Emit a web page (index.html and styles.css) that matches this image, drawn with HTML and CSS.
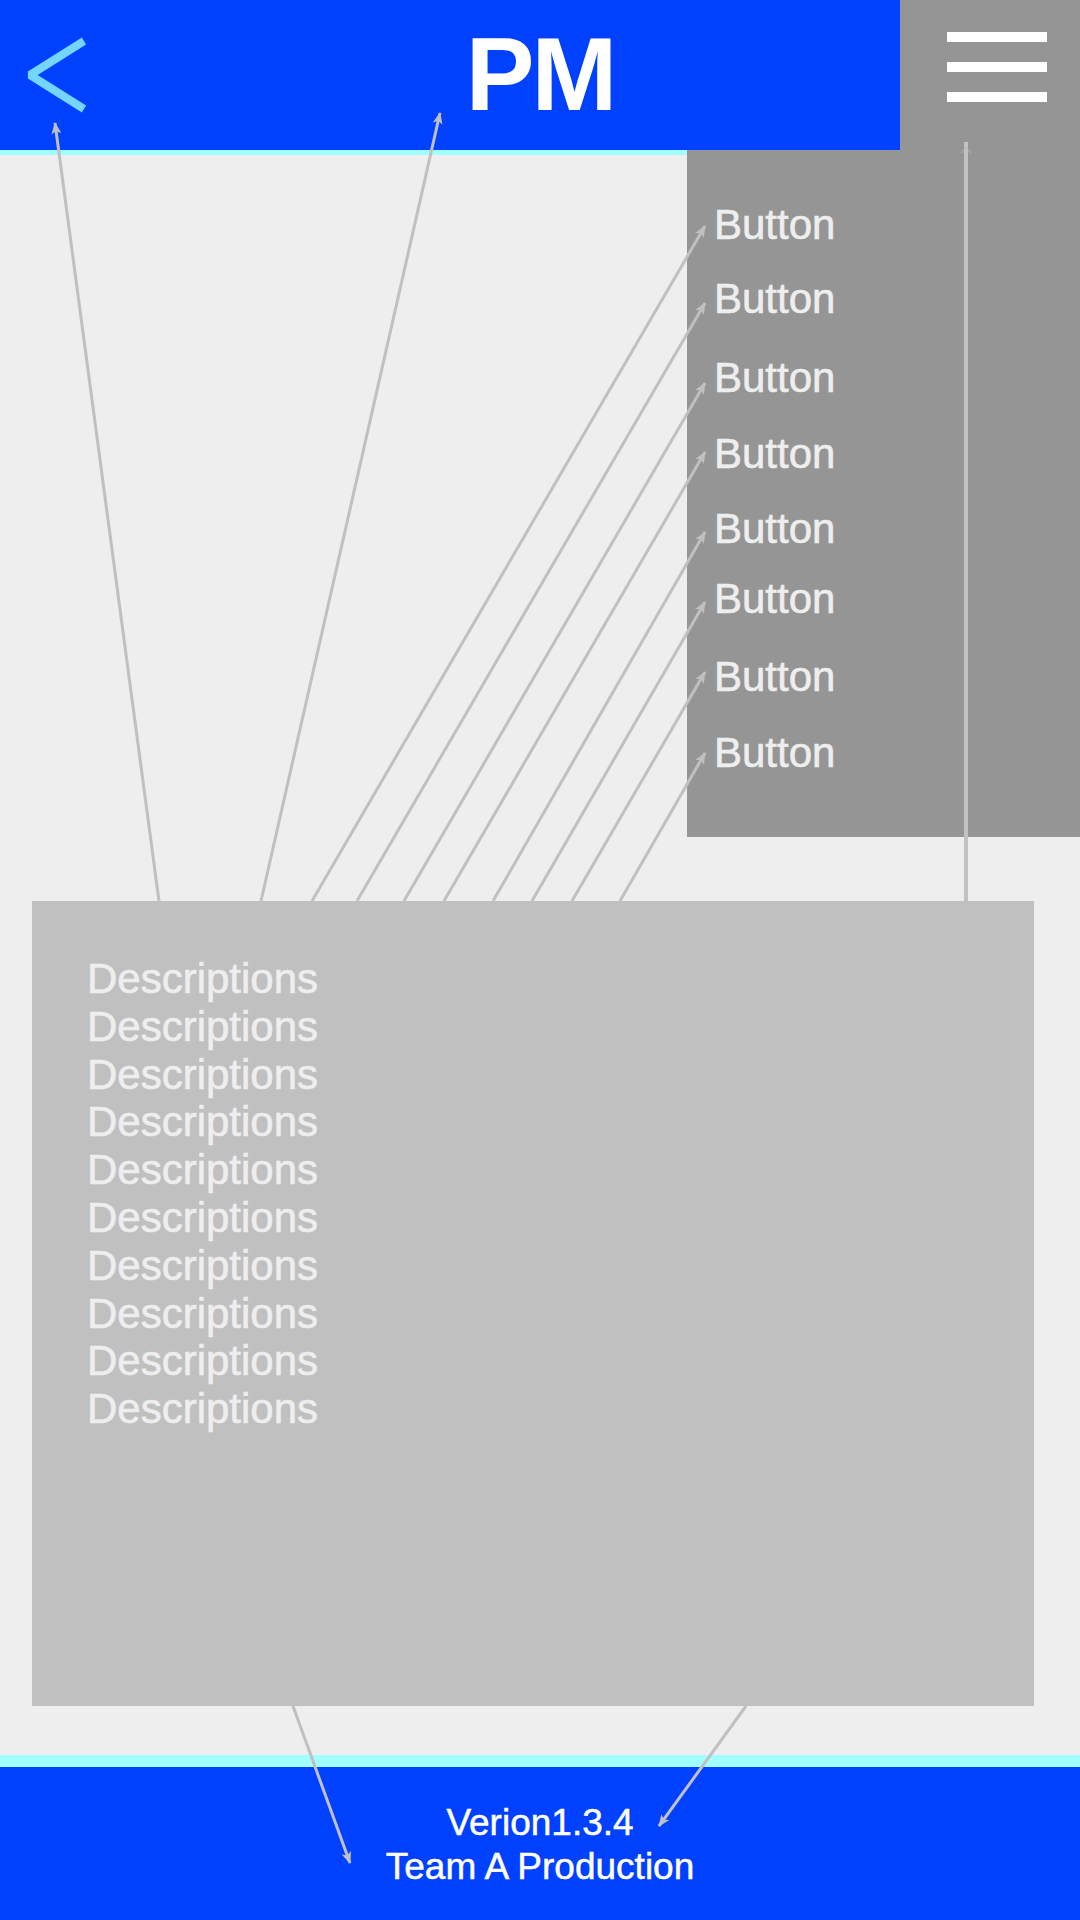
FILE: index.html
```html
<!DOCTYPE html>
<html lang="en">
<head>
<meta charset="utf-8">
<title>PM</title>
<link rel="stylesheet" href="styles.css">
</head>
<body>
<div class="screen">
  <header class="topbar">
    <div class="back">
      <svg width="120" height="150" viewBox="0 0 120 150" aria-hidden="true">
        <polyline points="84,41 30,75 84,109" fill="none" stroke="#74d6ff" stroke-width="8" stroke-linejoin="bevel"/>
      </svg>
    </div>
    <h1 class="title">PM</h1>
    <div class="menu-btn">
      <span class="bar"></span>
      <span class="bar"></span>
      <span class="bar"></span>
    </div>
  </header>
  <div class="accent"></div>
  <main class="content">
    <section class="desc-card">
      <p class="desc">Descriptions</p>
      <p class="desc">Descriptions</p>
      <p class="desc">Descriptions</p>
      <p class="desc">Descriptions</p>
      <p class="desc">Descriptions</p>
      <p class="desc">Descriptions</p>
      <p class="desc">Descriptions</p>
      <p class="desc">Descriptions</p>
      <p class="desc">Descriptions</p>
      <p class="desc">Descriptions</p>
    </section>
  </main>
  <footer class="footer">
    <div>Verion1.3.4</div>
    <div>Team A Production</div>
  </footer>
  <nav class="dropdown">
    <a class="menu-item">Button</a>
    <a class="menu-item">Button</a>
    <a class="menu-item">Button</a>
    <a class="menu-item">Button</a>
    <a class="menu-item">Button</a>
    <a class="menu-item">Button</a>
    <a class="menu-item">Button</a>
    <a class="menu-item">Button</a>
  </nav>
  <svg class="annotations" width="1080" height="1920" viewBox="0 0 1080 1920" aria-hidden="true">
    <defs>
      <marker id="head" viewBox="0 0 12 10" refX="11" refY="5" markerWidth="12" markerHeight="10" markerUnits="userSpaceOnUse" orient="auto">
        <path d="M0,0 L12,5 L0,10 L3,5 Z" fill="#c0c0c0"/>
      </marker>
    </defs>
    <g stroke="#c0c0c0" stroke-width="3" fill="none" marker-end="url(#head)">
      <line x1="159" y1="901" x2="55" y2="123"/>
      <line x1="261" y1="901" x2="440" y2="113"/>
      <line x1="312" y1="901" x2="705" y2="226"/>
      <line x1="357" y1="901" x2="705" y2="303"/>
      <line x1="404" y1="901" x2="705" y2="383"/>
      <line x1="444" y1="901" x2="705" y2="452"/>
      <line x1="493" y1="901" x2="705" y2="532"/>
      <line x1="532" y1="901" x2="705" y2="602"/>
      <line x1="572" y1="901" x2="705" y2="672"/>
      <line x1="620" y1="901" x2="705" y2="753"/>
      <line x1="293" y1="1706" x2="350" y2="1863"/>
      <line x1="746" y1="1706" x2="659" y2="1826"/>
    </g>
    <line x1="966" y1="901" x2="966" y2="142" stroke="#c2c2c2" stroke-width="4"/>
    <polyline points="961,153 966,147 971,153" fill="none" stroke="#b8b8b8" stroke-width="1"/>
  </svg>
</div>
</body>
</html>
```
FILE: styles.css
```css
html, body {
  margin: 0;
  padding: 0;
}

body {
  background: #eeeeee;
  font-family: "Liberation Sans", Arial, Helvetica, sans-serif;
}

.screen {
  position: relative;
  width: 1080px;
  height: 1920px;
  display: flex;
  flex-direction: column;
  overflow: hidden;
  background: #eeeeee;
}

/* ---------- header ---------- */
.topbar {
  flex: none;
  height: 150px;
  display: grid;
  grid-template-columns: 180px 1fr 180px;
  background: #0040ff;
}

.back svg {
  display: block;
}

.title {
  margin: 0;
  text-align: center;
  color: #ffffff;
  font-size: 103px;
  font-weight: 700;
  line-height: 150px;
  letter-spacing: -3px;
}

.menu-btn {
  background: #959595;
  display: flex;
  flex-direction: column;
  gap: 20px;
  padding: 32px 0 0 47px;
}

.bar {
  display: block;
  width: 100px;
  height: 10px;
  background: #ffffff;
}

.accent {
  flex: none;
  height: 5px;
  background: #a2feff;
}

/* ---------- content ---------- */
.content {
  flex: 1;
  padding: 746px 46px 0 32px;
}

.desc-card {
  box-sizing: border-box;
  height: 805px;
  background: #c0c0c0;
  padding: 54px 0 0 55px;
}

.desc {
  margin: 0;
  font-size: 42px;
  line-height: 47.8px;
  color: #eeeeee;
  -webkit-text-stroke: 0.6px #eeeeee;
}

/* ---------- footer ---------- */
.footer {
  flex: none;
  box-sizing: border-box;
  height: 165px;
  border-top: 12px solid #a2feff;
  background: #0040ff;
  color: #ffffff;
  text-align: center;
  font-size: 37px;
  line-height: 43.5px;
  padding-top: 34px;
  -webkit-text-stroke: 0.5px #ffffff;
}

/* ---------- dropdown menu ---------- */
.dropdown {
  position: absolute;
  top: 150px;
  right: 0;
  width: 393px;
  height: 687px;
  box-sizing: border-box;
  background: #959595;
  padding: 52px 0 0 27px;
  display: flex;
  flex-direction: column;
}

.menu-item {
  font-size: 42px;
  line-height: 46px;
  color: #eeeeee;
  text-decoration: none;
  -webkit-text-stroke: 0.6px #eeeeee;
}

.menu-item:nth-child(2) { margin-top: 28px; }
.menu-item:nth-child(3) { margin-top: 33px; }
.menu-item:nth-child(4) { margin-top: 30px; }
.menu-item:nth-child(5) { margin-top: 29px; }
.menu-item:nth-child(6) { margin-top: 24px; }
.menu-item:nth-child(7) { margin-top: 32px; }
.menu-item:nth-child(8) { margin-top: 30px; }

/* ---------- annotation arrows ---------- */
.annotations {
  position: absolute;
  top: 0;
  left: 0;
  pointer-events: none;
}
```
